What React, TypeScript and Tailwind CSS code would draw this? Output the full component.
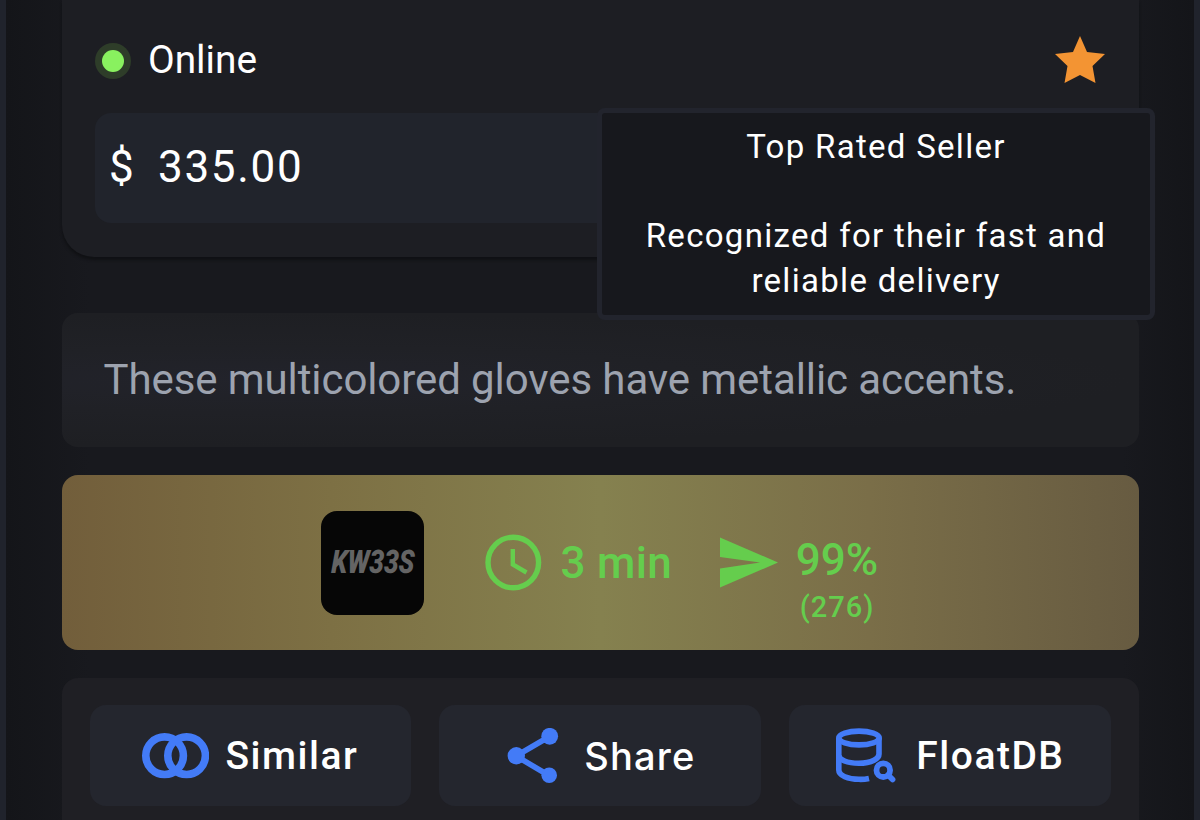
import type { ReactNode } from 'react'

function SimilarIcon() {
  return (
    <svg className="h-[46px] w-[67px]" viewBox="0 0 67 46" fill="none" stroke="#437bf7" strokeWidth="7.6">
      <circle cx="22.6" cy="22.7" r="18.8" />
      <circle cx="44.6" cy="22.7" r="18.8" />
    </svg>
  )
}

function ShareIcon() {
  return (
    <svg className="h-[56px] w-[52px]" viewBox="0 0 52 56" fill="#437bf7">
      <path d="M42.5 8.5 L9 28 L42 47.5" fill="none" stroke="#437bf7" strokeWidth="5.6" />
      <circle cx="42.7" cy="8.3" r="8.4" />
      <circle cx="9.3" cy="27.8" r="8.7" />
      <circle cx="42.2" cy="47.3" r="7.8" />
    </svg>
  )
}

function DatabaseSearchIcon() {
  return (
    <svg className="h-[56px] w-[61px]" viewBox="0 0 61 56" fill="none" stroke="#437bf7" strokeWidth="5.6">
      <ellipse cx="24" cy="10" rx="20.2" ry="6.9" />
      <path d="M3.8 10 V42 C3.8 47.5 13 51.3 24 51.3 Q29 51.5 34 50.4" />
      <path d="M3.8 27 C3.8 32 12.5 35.3 23.7 35.3 C30 35.3 35 34.3 39 32.2 Q44 29.7 44 26 V10" />
      <circle cx="48.3" cy="42.2" r="6.8" strokeWidth="5.8" />
      <path d="M53 47 L57.6 51.6" strokeWidth="5.6" strokeLinecap="round" />
    </svg>
  )
}

function ActionButton({ icon, label, className }: { icon: ReactNode; label: string; className: string }) {
  return (
    <button className={`flex h-[101px] w-[322px] items-center rounded-[16px] bg-[#24262e] leading-none font-medium text-white ${className}`}>
      {icon}
      <span className="pt-px">{label}</span>
    </button>
  )
}

function Tooltip() {
  return (
    <div className="absolute top-[108px] left-[591px] z-10 h-[212px] w-[558px] rounded-[8px] border-[5px] border-[#22242d] bg-[#17181d] pt-[12px] text-center text-[33px] leading-[44.7px] tracking-[1.3px] text-white">
      <p>Top Rated Seller</p>
      <br />
      <p>
        Recognized for their fast and
        <br />
        reliable delivery
      </p>
    </div>
  )
}

function SellerStats() {
  return (
    <section className="mt-[28px] flex h-[175px] rounded-[16px] bg-[linear-gradient(90deg,#725e3b_0%,#7d7044_25%,#85814f_50%,#7a6e48_75%,#675b41_100%)] pl-[259px] text-[#65cd4d]">
      <div className="mt-[36px] flex h-[103.5px] w-[103.5px] items-center justify-center rounded-[16px] bg-[#060606] pl-[2px]">
        <span className="inline-block scale-x-[0.8] -skew-x-3 pb-[2px] text-[32.5px] leading-none font-black text-[#646464] italic">
          KW33S
        </span>
      </div>
      <svg className="mt-[59px] ml-[60.5px] h-[58px] w-[58px]" viewBox="0 0 58 58" fill="none" stroke="#65cd4d">
        <circle cx="28.3" cy="28.5" r="25.3" strokeWidth="5.4" />
        <path d="M27.8 15 V30.5 L41.5 38.5" strokeWidth="4.4" />
      </svg>
      <span className="mt-[66px] ml-[18px] w-[111px] text-[44px] leading-[44px] font-medium tracking-[0.3px] whitespace-nowrap">3 min</span>
      <svg className="mt-[62px] ml-[47px] h-[52px] w-[59px]" viewBox="0 0 59 52" fill="#65cd4d">
        <path d="M1 0.5 L59 25.5 L1 50.5 V31.5 L41 25.5 L1 20 Z" />
      </svg>
      <div className="mt-[63px] ml-[17.5px] flex w-[84px] flex-col items-center font-medium">
        <span className="text-[44px] leading-[44px]">99%</span>
        <span className="mt-[10px] text-[29px] leading-[30px] tracking-[1px]">(276)</span>
      </div>
    </section>
  )
}

export default function App() {
  return (
    <div className="relative h-[820px] w-[1200px] overflow-hidden border-x-[6px] border-[#20232c] bg-[linear-gradient(90deg,#141519_0%,#18191e_7%,#18191e_94%,#141519_100%)] font-['Roboto',sans-serif]">
      <main className="ml-[55.5px] w-[1077px]">
        <section className="h-[257px] rounded-b-[32px] bg-[#1d1e23] px-[33.5px] shadow-[0_3px_3px_#101114]">
          <div className="flex h-[113px] items-start">
            <span className="mt-[43px] flex h-9 w-9 items-center justify-center rounded-full bg-[#2e3d29]">
              <span className="h-[22px] w-[22px] rounded-full bg-[#89f15f]" />
            </span>
            <span className="mt-[38px] ml-[17px] text-[38.8px] leading-[44px] text-white">Online</span>
            <svg className="mt-[35px] ml-auto h-[50px] w-[50px]" viewBox="0 0 50 50" fill="#f39433">
              <path d="M25 1 L32 17 L50 19 L37.5 31 L40.5 48 L25 40 L9.5 48 L12.5 31 L0 19 L18 17 Z" />
            </svg>
          </div>
          <div className="flex h-[110px] items-start rounded-[16px] bg-[#21242c] pt-[32px] pl-[14px] text-[44px] leading-[44px] text-white">
            <span className="w-[49px]">$</span>
            <span className="tracking-[1.7px]">335.00</span>
          </div>
        </section>

        <section className="mt-[56px] h-[134px] rounded-[16px] bg-[radial-gradient(ellipse_at_20%_50%,#22232b_0%,#202126_35%,#1e1f23_70%)] pt-[42px] pl-[42px] text-[42px] leading-[50px] tracking-[-0.09px] text-[#9da3af]">
          These multicolored gloves have metallic accents.
        </section>

        <SellerStats />

        <section className="mt-[28px] flex h-[160px] gap-[28px] rounded-t-[16px] bg-[#1f1f24] px-[28px] pt-[27px]">
          <ActionButton icon={<SimilarIcon />} label="Similar" className="gap-[17px] pl-[52px] text-[39px] tracking-[1.5px]" />
          <ActionButton icon={<ShareIcon />} label="Share" className="gap-[25px] pl-[68px] font-['Inter'] text-[38px] tracking-[1.2px]" />
          <ActionButton icon={<DatabaseSearchIcon />} label="FloatDB" className="gap-[20.5px] pl-[46px] text-[39px] tracking-[1.5px]" />
        </section>
      </main>
      <Tooltip />
    </div>
  )
}
